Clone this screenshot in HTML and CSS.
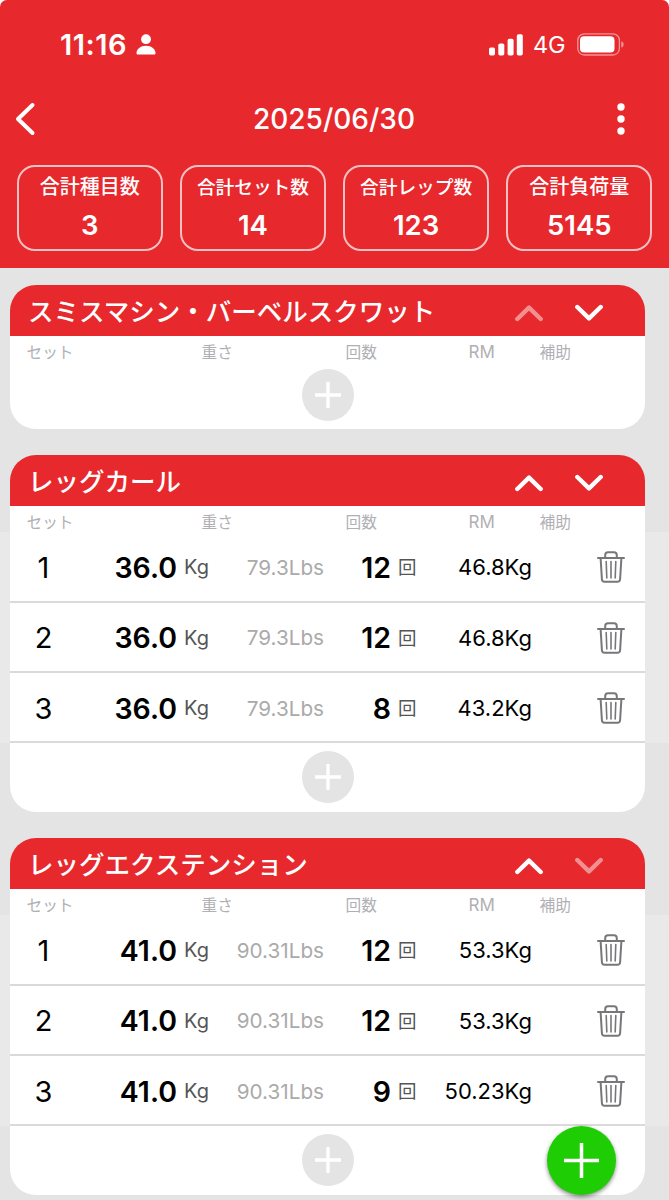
FILE: index.html
```
<!DOCTYPE html>
<html lang="ja">
<head>
    <meta charset="UTF-8">
    <meta name="viewport" content="width=device-width, initial-scale=1.0">
    <title>2025/06/30</title>
    <link rel="stylesheet" href="styles.css">
</head>
<body>
    <!-- 共通アイコン -->
    <svg class="sprite" width="0" height="0">
        <symbol id="up" viewBox="0 0 28 18"><path d="M2.3 15 14 3.6 25.7 15"/></symbol>
        <symbol id="down" viewBox="0 0 28 18"><path d="M2.3 3 14 14.4 25.7 3"/></symbol>
        <symbol id="plus" viewBox="0 0 26 26"><path d="M13 0v26M0 13h26"/></symbol>
        <symbol id="trash" viewBox="0 0 28 32">
            <path d="M1 6.9h26M8.2 6.5V4.2c0-1.9.9-3 2.8-3h6c1.9 0 2.800 1.100 2.800 3v2.300"/>
            <path d="M3.600 7l1.300 21.300c.1 1.600 1 2.500 2.600 2.500h13c1.600 0 2.500-.9 2.600-2.500L24.400 7"/>
            <path class="thin" d="M9.200 10.500l.6 16.500M14 10.500V27M18.800 10.500l-.6 16.500"/>
        </symbol>
    </svg>

    <div class="screen">
        <header class="header">
            <div class="status-bar">
                <span class="time">11:16</span>
                <svg class="person" width="20" height="21" viewBox="0 0 20 21">
                    <circle cx="10" cy="5.200" r="4.900"/>
                    <path d="M.5 19c0-4 4-7.300 9.500-7.300s9.500 3.300 9.500 7.300c0 1-.5 1.500-1.500 1.500H2C1 20.500.5 20 .5 19z"/>
                </svg>
                <svg class="signal" width="34" height="22" viewBox="0 0 34 22">
                    <rect x="0" y="13.500" width="6" height="8" rx="1.700"/>
                    <rect x="9.300" y="9.500" width="6" height="12" rx="1.700"/>
                    <rect x="18.600" y="4.700" width="6" height="16.800" rx="1.700"/>
                    <rect x="27.800" y=".3" width="6" height="21.200" rx="1.700"/>
                </svg>
                <span class="network">4G</span>
                <svg class="battery" width="47" height="23" viewBox="0 0 47 23">
                    <rect class="case" x=".8" y=".8" width="41.600" height="21.200" rx="6.500"/>
                    <rect x="3" y="3.300" width="34.500" height="16.200" rx="4"/>
                    <path class="tip" d="M44.300 8.200c1.600.6 2.300 1.700 2.300 3.200s-.7 2.600-2.300 3.200z"/>
                </svg>
            </div>
            <nav class="nav-bar">
                <svg class="back" width="25" height="34" viewBox="0 0 25 34"><path d="M17.500 3 3 17l14.500 14"/></svg>
                <h1 class="date">2025/06/30</h1>
                <svg class="menu" width="8" height="32" viewBox="0 0 8 32">
                    <circle cx="4" cy="4" r="3.700"/><circle cx="4" cy="16" r="3.700"/><circle cx="4" cy="28" r="3.700"/>
                </svg>
            </nav>
            <div class="summary">
                <div class="stat"><span class="stat-label">合計種目数</span><span class="stat-value">3</span></div>
                <div class="stat"><span class="stat-label small">合計セット数</span><span class="stat-value">14</span></div>
                <div class="stat"><span class="stat-label small">合計レップ数</span><span class="stat-value">123</span></div>
                <div class="stat"><span class="stat-label">合計負荷量</span><span class="stat-value">5145</span></div>
            </div>
        </header>

        <main class="list">
            <section class="exercise">
                <div class="title-bar">
                    <h2 class="title">スミスマシン・バーベルスクワット</h2>
                    <svg class="arrow disabled"><use href="#up"/></svg>
                    <svg class="arrow"><use href="#down"/></svg>
                </div>
                <div class="columns"><span class="c-set">セット</span><span class="c-weight">重さ</span><span class="c-reps">回数</span><span class="c-rm">RM</span><span class="c-assist">補助</span></div>
                <div class="footer empty"><button class="add"><svg><use href="#plus"/></svg></button></div>
            </section>

            <section class="exercise">
                <div class="title-bar">
                    <h2 class="title">レッグカール</h2>
                    <svg class="arrow"><use href="#up"/></svg>
                    <svg class="arrow"><use href="#down"/></svg>
                </div>
                <div class="columns"><span class="c-set">セット</span><span class="c-weight">重さ</span><span class="c-reps">回数</span><span class="c-rm">RM</span><span class="c-assist">補助</span></div>
                <div class="sets">
                    <div class="row">
                        <span class="no">1</span><span class="weight">36.0</span><span class="kg">Kg</span><span class="lbs">79.3Lbs</span>
                        <span class="reps">12</span><span class="kai">回</span><span class="rm">46.8Kg</span>
                        <svg class="trash"><use href="#trash"/></svg>
                    </div>
                    <div class="row">
                        <span class="no">2</span><span class="weight">36.0</span><span class="kg">Kg</span><span class="lbs">79.3Lbs</span>
                        <span class="reps">12</span><span class="kai">回</span><span class="rm">46.8Kg</span>
                        <svg class="trash"><use href="#trash"/></svg>
                    </div>
                    <div class="row">
                        <span class="no">3</span><span class="weight">36.0</span><span class="kg">Kg</span><span class="lbs">79.3Lbs</span>
                        <span class="reps">8</span><span class="kai">回</span><span class="rm">43.2Kg</span>
                        <svg class="trash"><use href="#trash"/></svg>
                    </div>
                </div>
                <div class="footer"><button class="add"><svg><use href="#plus"/></svg></button></div>
            </section>

            <section class="exercise">
                <div class="title-bar">
                    <h2 class="title">レッグエクステンション</h2>
                    <svg class="arrow"><use href="#up"/></svg>
                    <svg class="arrow disabled"><use href="#down"/></svg>
                </div>
                <div class="columns"><span class="c-set">セット</span><span class="c-weight">重さ</span><span class="c-reps">回数</span><span class="c-rm">RM</span><span class="c-assist">補助</span></div>
                <div class="sets">
                    <div class="row">
                        <span class="no">1</span><span class="weight">41.0</span><span class="kg">Kg</span><span class="lbs">90.31Lbs</span>
                        <span class="reps">12</span><span class="kai">回</span><span class="rm">53.3Kg</span>
                        <svg class="trash"><use href="#trash"/></svg>
                    </div>
                    <div class="row">
                        <span class="no">2</span><span class="weight">41.0</span><span class="kg">Kg</span><span class="lbs">90.31Lbs</span>
                        <span class="reps">12</span><span class="kai">回</span><span class="rm">53.3Kg</span>
                        <svg class="trash"><use href="#trash"/></svg>
                    </div>
                    <div class="row">
                        <span class="no">3</span><span class="weight">41.0</span><span class="kg">Kg</span><span class="lbs">90.31Lbs</span>
                        <span class="reps">9</span><span class="kai">回</span><span class="rm">50.23Kg</span>
                        <svg class="trash"><use href="#trash"/></svg>
                    </div>
                </div>
                <div class="footer"><button class="add"><svg><use href="#plus"/></svg></button></div>
            </section>
        </main>

        <button class="fab"><svg><use href="#plus"/></svg></button>
    </div>
</body>
</html>
```
FILE: styles.css
```
* {
    box-sizing: border-box;
}

body {
    margin: 0;
    background: #ffffff;
    font-family: Inter, "Noto Sans CJK JP", sans-serif;
    color: #000000;
}

.sprite {
    position: absolute;
}

.screen {
    position: relative;
    height: 1200px;
    overflow: hidden;
    background: #e4e4e4;
    border-radius: 7px 7px 0 0;
}

/* ヘッダー */
.header {
    height: 267.5px;
    background: #e7292d;
    color: #ffffff;
}

.status-bar {
    display: flex;
    align-items: center;
    height: 89px;
    padding: 0 45px 0 60px;
}

.status-bar svg {
    flex: none;
    fill: #ffffff;
}

.time {
    width: 76px;
    font-size: 29px;
    font-weight: 600;
    letter-spacing: 0.5px;
}

.signal {
    margin-left: auto;
}

.network {
    width: 54px;
    padding-left: 10px;
    font-size: 23.5px;
    letter-spacing: -0.3px;
}

.battery .case {
    fill: none;
    stroke: #ffffff;
    stroke-width: 1.3;
    opacity: 0.5;
}

.battery .tip {
    opacity: 0.5;
}

.nav-bar {
    display: flex;
    align-items: center;
    height: 60px;
    padding: 0 44px 0 15px;
}

.back {
    flex: none;
    fill: none;
    stroke: #ffffff;
    stroke-width: 4;
    stroke-linecap: round;
    stroke-linejoin: round;
}

.date {
    flex: 1;
    margin: 0 0 0 -1px;
    padding-left: 12px;
    font-size: 28px;
    font-weight: 500;
    text-align: center;
}

.menu {
    flex: none;
    fill: #ffffff;
}

.summary {
    display: flex;
    gap: 17.6px;
    padding: 16px 17px 0;
}

.stat {
    display: flex;
    flex: 1;
    flex-direction: column;
    align-items: center;
    height: 86px;
    padding-top: 4px;
    border: 2px solid #f7c0c2;
    border-radius: 18px;
}

.stat-label {
    height: 35px;
    font-size: 20px;
    font-weight: 500;
    line-height: 33px;
    white-space: nowrap;
}

.stat-label.small {
    font-size: 18.7px;
}

.stat-value {
    font-size: 27.5px;
    font-weight: 600;
    line-height: 38px;
}

/* 種目カード */
.list {
    padding-top: 17.5px;
}

.exercise {
    margin-bottom: 26.1px;
}

.title-bar,
.columns,
.footer,
.row {
    width: 635px;
    margin-left: 10px;
}

.title-bar {
    display: flex;
    align-items: center;
    height: 51.2px;
    padding: 0 42px 0 18px;
    background: #e7292d;
    border-radius: 26px 26px 0 0;
    color: #ffffff;
}

.title {
    flex: 1;
    margin: 0;
    padding-top: 3px;
    font-size: 25.5px;
    font-weight: 500;
    line-height: 48px;
}

.arrow {
    width: 28px;
    height: 18px;
    margin: 5px 0 0 32px;
    fill: none;
    stroke: #ffffff;
    stroke-width: 4.4;
    stroke-linecap: round;
    stroke-linejoin: round;
}

.arrow.disabled {
    opacity: 0.48;
}

.columns {
    display: flex;
    height: 26.1px;
    padding-left: 16.5px;
    background: #ffffff;
    color: #b0b0b4;
    font-size: 15.7px;
    line-height: 33px;
}

.c-set {
    width: 175px;
}

.c-weight {
    width: 144px;
}

.c-reps {
    width: 123px;
}

.c-rm {
    width: 71px;
    font-size: 17px;
}

.sets {
    background: #e9e9e9;
}

.row {
    display: flex;
    align-items: center;
    height: 70.4px;
    padding-top: 2px;
    background: #ffffff;
    border-bottom: 2px solid #dadada;
}

.no {
    width: 67px;
    font-size: 29px;
    text-align: center;
}

.weight,
.reps {
    font-size: 28.5px;
    font-weight: 600;
    text-align: right;
}

.weight {
    width: 100px;
}

.reps {
    width: 67px;
}

.kg {
    width: 43px;
    padding-left: 7px;
    color: #555555;
    font-size: 20px;
}

.lbs {
    width: 104px;
    color: #aaaaaa;
    font-size: 20.7px;
    text-align: right;
}

.kai {
    width: 27px;
    padding: 0 0 2px 7px;
    color: #555555;
    font-size: 18.5px;
}

.rm {
    width: 114px;
    font-size: 22px;
    text-align: right;
}

.trash {
    width: 28px;
    height: 32px;
    margin-left: 65px;
    fill: none;
    stroke: #77777a;
    stroke-width: 2;
    stroke-linecap: round;
}

.thin {
    stroke-width: 1.6;
}

.footer {
    display: flex;
    justify-content: center;
    height: 68.4px;
    padding-top: 8px;
    background: #ffffff;
    border-radius: 0 0 26px 26px;
}

.footer.empty {
    height: 66.6px;
    padding-top: 6.4px;
}

.add,
.fab {
    display: flex;
    align-items: center;
    justify-content: center;
    padding: 0;
    border: none;
    border-radius: 50%;
}

.add {
    width: 52px;
    height: 52px;
    background: #e4e4e4;
}

.add svg {
    width: 26px;
    height: 26px;
    stroke: #ffffff;
    stroke-width: 3.4;
}

/* 種目追加ボタン */
.fab {
    position: absolute;
    right: 53px;
    bottom: 5px;
    width: 69px;
    height: 69px;
    background: #1fcd05;
    box-shadow: 0 2px 4px rgba(0, 0, 0, 0.45);
}

.fab svg {
    width: 35px;
    height: 35px;
    stroke: #ffffff;
    stroke-width: 2.6;
}
```
